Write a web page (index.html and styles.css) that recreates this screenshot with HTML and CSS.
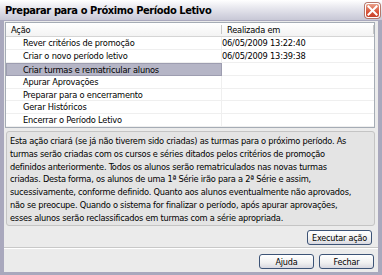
FILE: index.html
```html
<!DOCTYPE html>
<html>
<head>
<meta charset="utf-8">
<link rel="stylesheet" href="styles.css">
</head>
<body>
<div class="window">
  <div class="titlebar">
    <span class="title">Preparar para o Próximo Período Letivo</span>
    <span class="close"><svg width="11" height="11" viewBox="0 0 11 11"><path d="M1.5 1.5L9.5 9.5M9.5 1.5L1.5 9.5" stroke="#fff" stroke-width="2" stroke-linecap="square"/></svg></span>
  </div>
  <div class="body">
    <div class="list">
      <div class="head">
        <div class="hc c1">Ação</div>
        <div class="hc c2">Realizada em</div>
      </div>
      <div class="row"><div class="c c1">Rever critérios de promoção</div><div class="c c2">06/05/2009 13:22:40</div></div>
      <div class="row"><div class="c c1">Criar o novo período letivo</div><div class="c c2">06/05/2009 13:39:38</div></div>
      <div class="row"><div class="c c1 sel">Criar turmas e rematricular alunos</div><div class="c c2"></div></div>
      <div class="row"><div class="c c1">Apurar Aprovações</div><div class="c c2"></div></div>
      <div class="row"><div class="c c1">Preparar para o encerramento</div><div class="c c2"></div></div>
      <div class="row"><div class="c c1">Gerar Históricos</div><div class="c c2"></div></div>
      <div class="row"><div class="c c1">Encerrar o Período Letivo</div><div class="c c2"></div></div>
    </div>
    <div class="desc">Esta ação criará (se já não tiverem sido criadas) as turmas para o próximo período. As<br>turmas serão criadas com os cursos e séries ditados pelos critérios de promoção<br>definidos anteriormente. Todos os alunos serão rematriculados nas novas turmas<br>criadas. Desta forma, os alunos de uma 1ª Série irão para a 2ª Série e assim,<br>sucessivamente, conforme definido. Quanto aos alunos eventualmente não aprovados,<br>não se preocupe. Quando o sistema for finalizar o período, após apurar aprovações,<br>esses alunos serão reclassificados em turmas com a série apropriada.</div>
    <div class="actions"><button class="btn wide">Executar ação</button></div>
  </div>
  <div class="footer">
    <button class="btn">Ajuda</button>
    <button class="btn">Fechar</button>
  </div>
</div>
</body>
</html>
```
FILE: styles.css
```css
* { box-sizing: border-box; }
html, body { margin: 0; padding: 0; }
body {
  width: 382px; height: 275px; overflow: hidden;
  font-family: "DejaVu Sans Condensed", "Liberation Sans Narrow", "Liberation Sans", Arial, sans-serif;
  font-size: 9.2px; letter-spacing: -0.2px; color: #000;
}
.window {
  width: 382px; height: 275px;
  background: #ebebeb;
  border-left: 4px solid #a9a8bd;
  border-right: 4px solid #a9a8bd;
  border-bottom: 3px solid #a9a8bd;
  display: flex; flex-direction: column;
}
.titlebar {
  height: 21px; margin: 0 -4px;
  background: linear-gradient(#ffffff 0%, #eaeaf0 35%, #d7d7e2 70%, #c8c8d6 100%);
  border-bottom: 1px solid #a9a8bd;
  display: flex; align-items: center; justify-content: space-between;
  padding: 0 2px 0 5px;
}
.title { font-weight: bold; font-size: 11px; letter-spacing: -0.4px; color: #000; }
.close {
  width: 15px; height: 15px; border-radius: 3px;
  background: linear-gradient(#e9a08a, #d8553a 60%, #c8412a);
  border: 1px solid #fff;
  box-shadow: 0 0 0 1px #b5766a;
  display: flex; align-items: center; justify-content: center;
}
.body { flex: 1; padding: 1px 3px 0 1px; display: flex; flex-direction: column; }
.list {
  background: #fff; border: 1px solid #a5acb5;
  height: 106px;
}
.head { display: flex; height: 14px; border-bottom: 1px solid #d5d5d5; background: linear-gradient(#fff, #f3f3f3); }
.hc { padding: 0 5px; }
.head .c1 { width: 216px; border-right: 1px solid #c8c8c8; margin: 2px 0; line-height: 10px; }
.head .c2 { flex: 1; border-right: 1px solid #c8c8c8; margin: 2px 0; line-height: 10px; }
.row { display: flex; height: 12.9px; }
.c { line-height: 12px; border-bottom: 1px solid #efefef; white-space: nowrap; }
.row .c1 { width: 216px; padding-left: 17px; border-right: 1px solid #efefef; }
.row .c2 { flex: 1; padding-left: 0; }
.row .c1.sel { background: #b5b5c6; border: 1px solid #9d9db0; padding-left: 16px; }
.desc {
  margin: 3px 0 0 1px;
  height: 95px;
  background: #e4e4e4;
  border: 1px solid #c4c4c4;
  border-radius: 3px;
  padding: 3px 3px;
  line-height: 12.8px;
  font-size: 9.2px;
  letter-spacing: -0.25px;
  white-space: nowrap;
  overflow: hidden;
}
.actions { display: flex; justify-content: flex-end; padding: 4px 3px 0 0; }
.btn {
  font-family: inherit; font-size: 9px; letter-spacing: -0.2px; white-space: nowrap;
  height: 15px; width: 55px; padding: 0;
  background: linear-gradient(#ffffff, #f0f0f0 60%, #d8d8e0);
  border: 1px solid #3c5376; border-radius: 3px; color: #000;
}
.btn.wide { width: 65px; }
.footer {
  height: 25px; border-top: 1px solid #c8c8c8;
  box-shadow: inset 0 1px 0 #fff;
  display: flex; justify-content: flex-end; align-items: flex-start; gap: 5px;
  padding: 6px 4px 0 0;
}
```
